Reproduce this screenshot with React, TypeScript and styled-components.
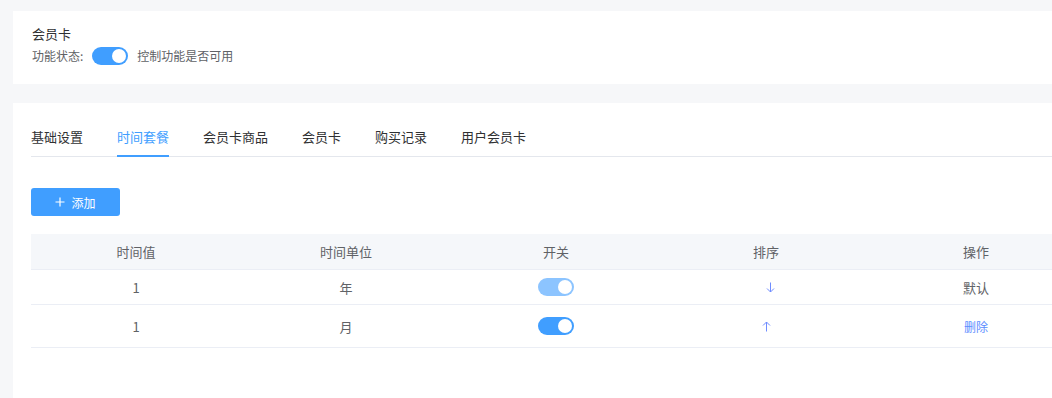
import styled, { createGlobalStyle } from "styled-components";

const GlobalStyle = createGlobalStyle`
  html, body {
    margin: 0;
    padding: 0;
    background: #f6f7f9;
    overflow: hidden;
  }
  body {
    font-family: "Noto Sans CJK SC", "Noto Sans", "Liberation Sans", sans-serif;
    color: #606266;
  }
`;

const Page = styled.div`
  width: 1120px;
  padding: 11px 0 0 13px;
  box-sizing: border-box;
`;

const Card = styled.div<{ $top?: number }>`
  background: #fff;
  margin-top: ${(p) => p.$top ?? 0}px;
`;

const StatusCard = styled(Card)`
  padding: 13px 19px 19px;
`;

const Title = styled.div`
  font-size: 13px;
  line-height: 20px;
  color: #303133;
`;

const StatusRow = styled.div`
  display: flex;
  align-items: center;
  margin-top: 3px;
  font-size: 12px;
  line-height: 18px;
  color: #606266;
  gap: 9px;
`;

const Switch = styled.span<{ $faded?: boolean }>`
  position: relative;
  display: inline-block;
  width: 36px;
  height: 18px;
  border-radius: 9px;
  background: #409eff;
  opacity: ${(p) => (p.$faded ? 0.6 : 1)};
  flex: none;

  &::after {
    content: "";
    position: absolute;
    top: 2px;
    right: 2px;
    width: 14px;
    height: 14px;
    border-radius: 50%;
    background: #fff;
  }
`;

const MainCard = styled(Card)`
  padding: 14px 18px 60px;
`;

const Tabs = styled.div`
  display: flex;
  height: 40px;
  border-bottom: 1px solid #e4e7ed;
  box-sizing: border-box;
`;

const Tab = styled.div<{ $active?: boolean }>`
  position: relative;
  padding: 0 17px;
  font-size: 13px;
  line-height: 40px;
  color: ${(p) => (p.$active ? "#409eff" : "#303133")};

  &:first-child {
    padding-left: 0;
  }

  &::after {
    content: "";
    display: ${(p) => (p.$active ? "block" : "none")};
    position: absolute;
    left: 17px;
    right: 17px;
    bottom: -1px;
    height: 2px;
    background: #409eff;
  }
`;

const AddButton = styled.button`
  margin-top: 31px;
  width: 89px;
  height: 28px;
  border: none;
  border-radius: 3px;
  background: #409eff;
  color: #fff;
  font-family: inherit;
  font-size: 12px;
  display: flex;
  align-items: center;
  justify-content: center;
  gap: 6px;
  padding: 0;
`;

const Table = styled.div`
  margin-top: 18px;
  width: 1050px;
  font-size: 13px;
`;

const Row = styled.div<{ $head?: boolean; $h: number }>`
  display: grid;
  grid-template-columns: repeat(5, 1fr);
  height: ${(p) => p.$h}px;
  align-items: center;
  background: ${(p) => (p.$head ? "#f5f7fa" : "#fff")};
  border-bottom: 1px solid #ebeef5;
  box-sizing: border-box;
`;

const Cell = styled.div`
  display: flex;
  justify-content: center;
  align-items: center;
  color: #606266;
`;

const Arrow = styled.svg`
  width: 9px;
  height: 11px;
  color: #6f8cff;
`;

const LinkText = styled.span`
  font-size: 12px;
  color: #5b8cff;
`;

const PlusIcon = () => (
  <svg width="10" height="10" viewBox="0 0 10 10">
    <path d="M5 0.5V9.5M0.5 5H9.5" stroke="#fff" strokeWidth="1.2" />
  </svg>
);

const SortArrow = ({ up, shift }: { up: boolean; shift: number }) => (
  <Arrow viewBox="0 0 9 11" style={{ marginLeft: shift }}>
    {up ? (
      <path d="M4.5 10.5V1M1 4.5L4.5 1L8 4.5" stroke="currentColor" fill="none" strokeWidth="1" />
    ) : (
      <path d="M4.5 0.5V10M1 6.5L4.5 10L8 6.5" stroke="currentColor" fill="none" strokeWidth="1" />
    )}
  </Arrow>
);

const tabs = ["基础设置", "时间套餐", "会员卡商品", "会员卡", "购买记录", "用户会员卡"];

const rows = [
  { value: "1", unit: "年", faded: true, up: false, h: 35 },
  { value: "1", unit: "月", faded: false, up: true, h: 43 },
];

function App() {
  return (
    <>
      <GlobalStyle />
      <Page>
        <StatusCard>
          <Title>会员卡</Title>
          <StatusRow>
            <span>功能状态:</span>
            <Switch />
            <span>控制功能是否可用</span>
          </StatusRow>
        </StatusCard>
        <MainCard $top={19}>
          <Tabs>
            {tabs.map((t) => (
              <Tab key={t} $active={t === "时间套餐"}>
                {t}
              </Tab>
            ))}
          </Tabs>
          <AddButton>
            <PlusIcon />
            添加
          </AddButton>
          <Table>
            <Row $head $h={36}>
              <Cell>时间值</Cell>
              <Cell>时间单位</Cell>
              <Cell>开关</Cell>
              <Cell>排序</Cell>
              <Cell>操作</Cell>
            </Row>
            {rows.map((r, i) => (
              <Row key={i} $h={r.h}>
                <Cell>{r.value}</Cell>
                <Cell>{r.unit}</Cell>
                <Cell>
                  <Switch $faded={r.faded} />
                </Cell>
                <Cell>
                  <SortArrow up={r.up} shift={r.up ? 0 : 8} />
                </Cell>
                <Cell>{i === 0 ? "默认" : <LinkText>删除</LinkText>}</Cell>
              </Row>
            ))}
          </Table>
        </MainCard>
      </Page>
    </>
  );
}

export default App;
